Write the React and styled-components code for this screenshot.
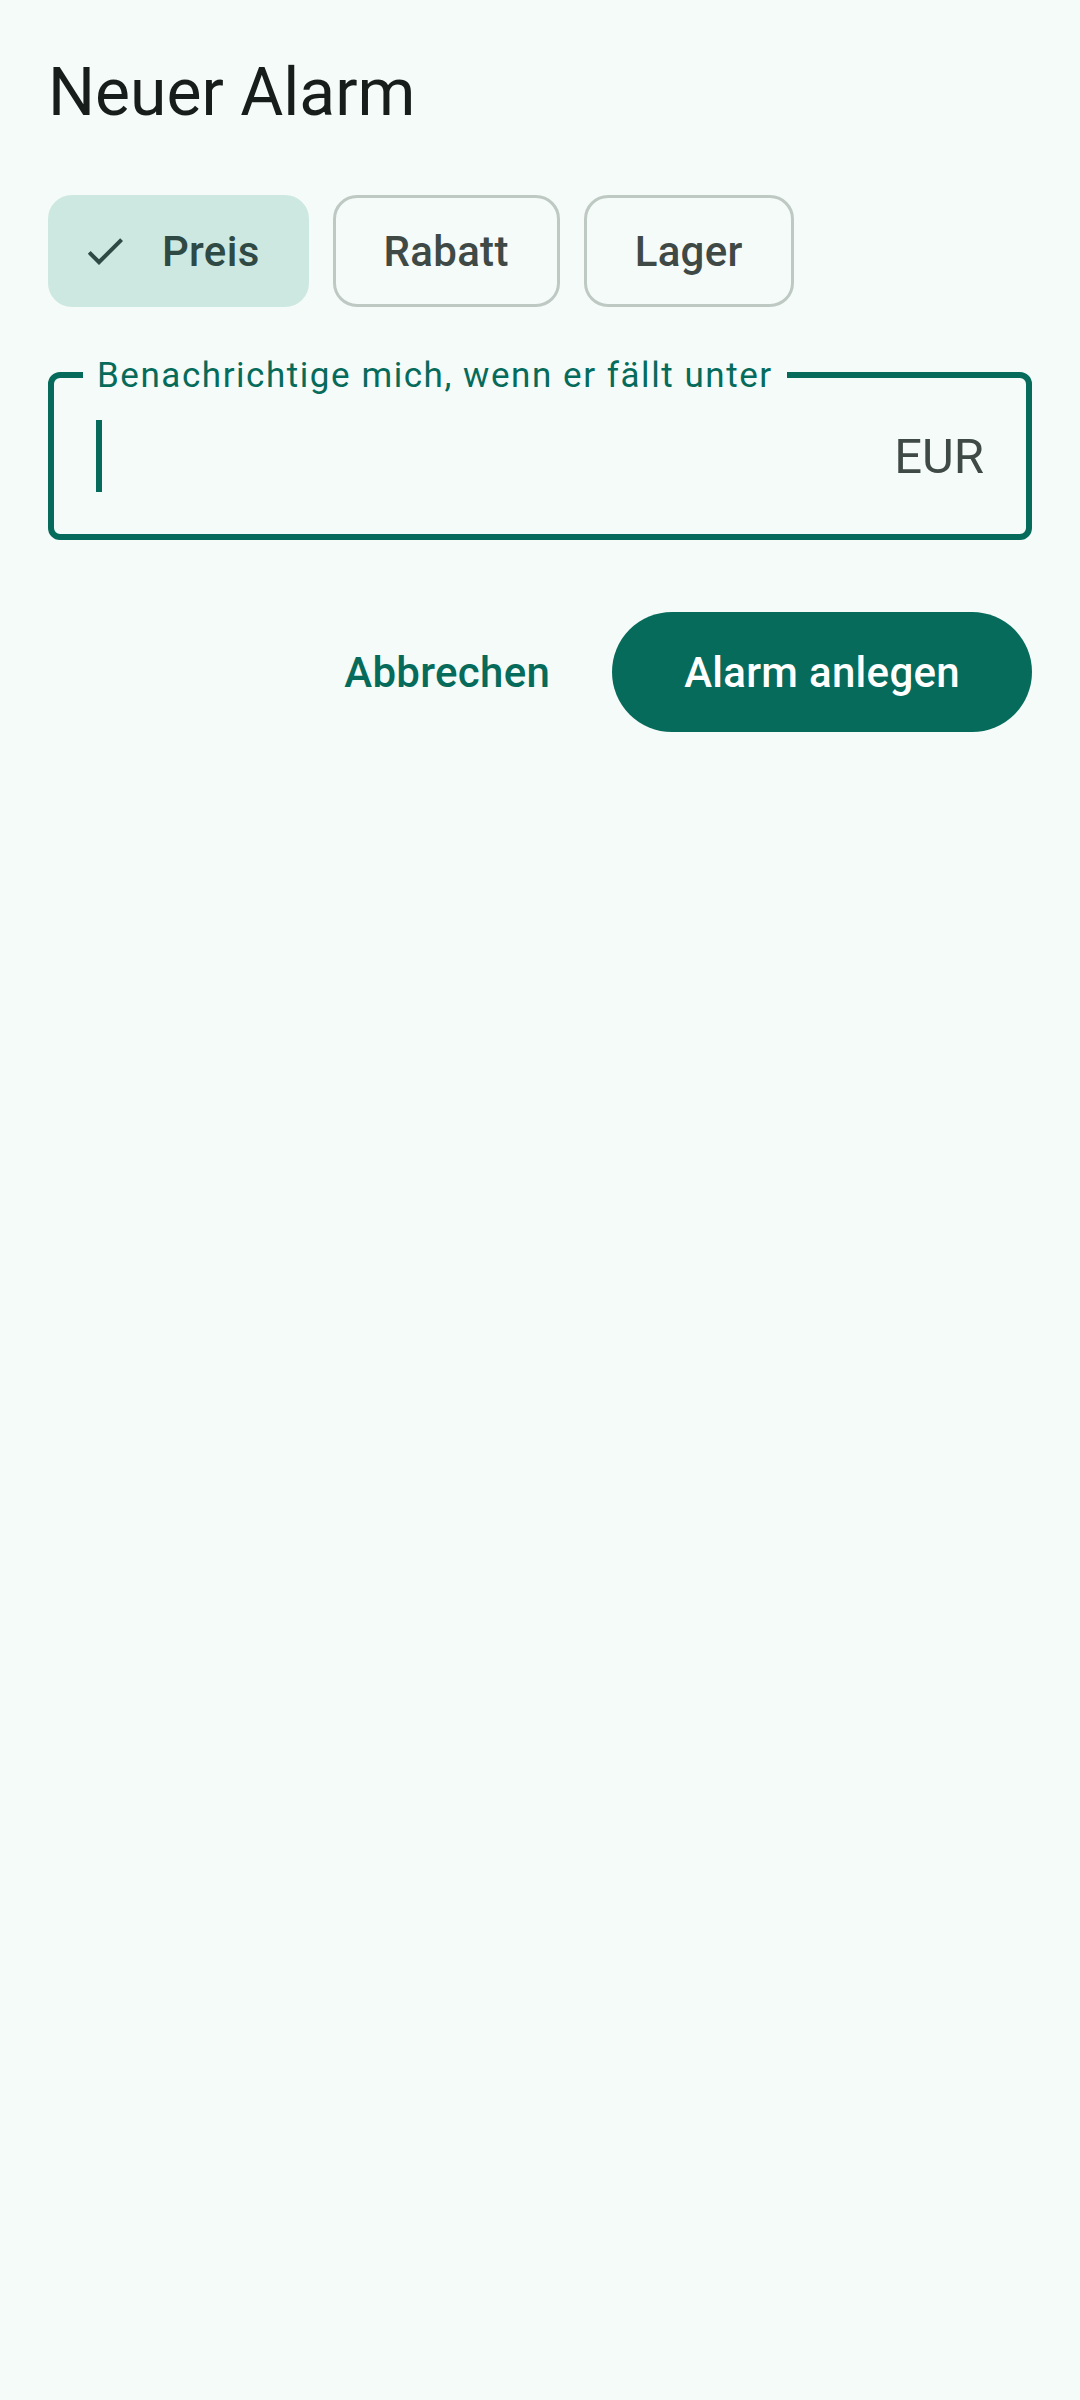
import React from 'react'
import styled, { createGlobalStyle, css } from 'styled-components'

const GlobalStyle = createGlobalStyle`
  html, body {
    margin: 0;
    padding: 0;
    background: #f5fbf8;
  }
  body {
    font-family: Roboto, "Liberation Sans", sans-serif;
    -webkit-font-smoothing: antialiased;
  }
`

const Page = styled.div`
  min-height: 2400px;
  box-sizing: border-box;
  padding: 51px 48px 0;
  background: #f5fbf8;
`

const Title = styled.h1`
  margin: 0;
  font-size: 66px;
  line-height: 84px;
  font-weight: 400;
  color: #171d1b;
`

const ChipRow = styled.div`
  display: flex;
  gap: 24px;
  margin-top: 60px;
`

const Chip = styled.button`
  display: flex;
  align-items: center;
  box-sizing: border-box;
  height: 112px;
  padding: 0 48px;
  border: 3px solid #bfc9c4;
  border-radius: 24px;
  background: transparent;
  font-family: inherit;
  font-size: 42px;
  font-weight: 500;
  letter-spacing: 0.3px;
  color: #3f4946;

  ${(p) =>
    p.$selected &&
    css`
      padding: 0 46px 0 30px;
      gap: 33px;
      border-color: #cde8e1;
      background: #cde8e1;
      color: #2f4a44;
    `}
`

const CheckIcon = () => (
  <svg width="48" height="48" viewBox="0 0 24 24" fill="currentColor">
    <path d="M9 16.17L4.83 12l-1.42 1.41L9 19 21 7l-1.41-1.41z" />
  </svg>
)

const Field = styled.div`
  position: relative;
  display: flex;
  align-items: center;
  box-sizing: border-box;
  height: 168px;
  margin-top: 65px;
  padding: 0 42px;
  border: 6px solid #066b5b;
  border-radius: 12px;
`

const FloatingLabel = styled.span`
  position: absolute;
  top: -20px;
  left: 29px;
  padding: 0 14px;
  background: #f5fbf8;
  font-size: 35px;
  line-height: 36px;
  letter-spacing: 1.55px;
  color: #066b5b;
`

const Cursor = styled.span`
  width: 6px;
  height: 72px;
  background: #066b5b;
`

const Suffix = styled.span`
  margin-left: auto;
  font-size: 49px;
  color: #3f4946;
`

const Actions = styled.div`
  display: flex;
  justify-content: flex-end;
  gap: 26px;
  margin-top: 72px;
`

const Button = styled.button`
  height: 120px;
  padding: 0 36px;
  border: none;
  border-radius: 60px;
  background: transparent;
  font-family: inherit;
  font-size: 42px;
  font-weight: 500;
  letter-spacing: 0.3px;
  color: #066b5b;

  ${(p) =>
    p.$filled &&
    css`
      padding: 0 72px;
      background: #066b5b;
      color: #ffffff;
    `}
`

const chips = ['Preis', 'Rabatt', 'Lager']

export default function App() {
  const [selected, setSelected] = React.useState('Preis')

  return (
    <>
      <GlobalStyle />
      <Page>
        <Title>Neuer Alarm</Title>
        <ChipRow>
          {chips.map((c) => (
            <Chip key={c} $selected={c === selected} onClick={() => setSelected(c)}>
              {c === selected && <CheckIcon />}
              {c}
            </Chip>
          ))}
        </ChipRow>
        <Field>
          <FloatingLabel>Benachrichtige mich, wenn er fällt unter</FloatingLabel>
          <Cursor />
          <Suffix>EUR</Suffix>
        </Field>
        <Actions>
          <Button>Abbrechen</Button>
          <Button $filled>Alarm anlegen</Button>
        </Actions>
      </Page>
    </>
  )
}
